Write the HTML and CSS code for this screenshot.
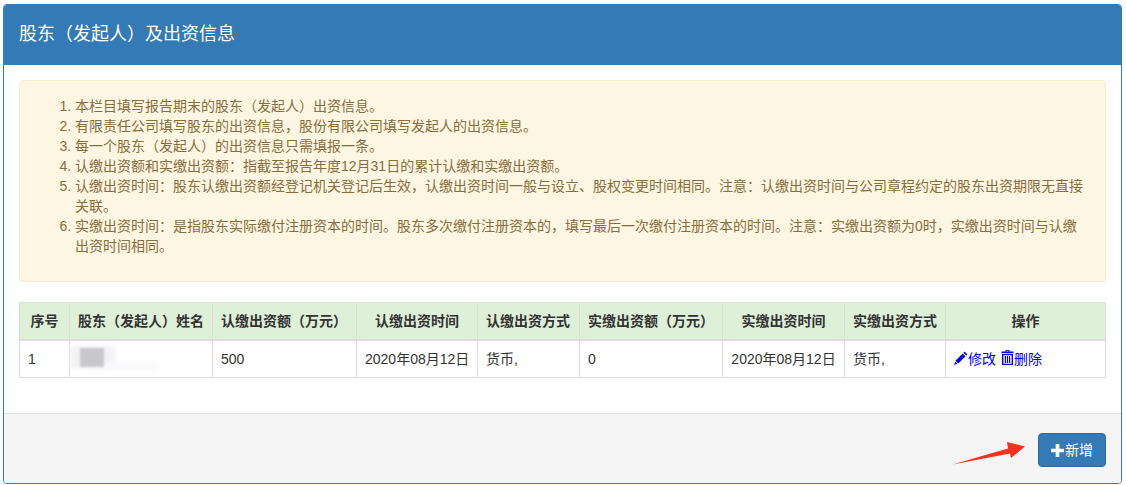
FILE: index.html

```html
<!DOCTYPE html>
<html lang="zh-CN">
<head>
  <meta charset="UTF-8" />
  <title>股东（发起人）及出资信息</title>
  <link rel="stylesheet" href="styles.css">
</head>
<body>
  <div class="panel">
    <div class="panel-heading">股东（发起人）及出资信息</div>
    <div class="panel-body">
      <div class="alert">
        <ol>
          <li>本栏目填写报告期末的股东（发起人）出资信息。</li>
          <li>有限责任公司填写股东的出资信息，股份有限公司填写发起人的出资信息。</li>
          <li>每一个股东（发起人）的出资信息只需填报一条。</li>
          <li>认缴出资额和实缴出资额：指截至报告年度12月31日的累计认缴和实缴出资额。</li>
          <li>认缴出资时间：股东认缴出资额经登记机关登记后生效，认缴出资时间一般与设立、股权变更时间相同。注意：认缴出资时间与公司章程约定的股东出资期限无直接关联。</li>
          <li>实缴出资时间：是指股东实际缴付注册资本的时间。股东多次缴付注册资本的，填写最后一次缴付注册资本的时间。注意：实缴出资额为0时，实缴出资时间与认缴出资时间相同。</li>
        </ol>
      </div>
      <table class="table">
        <colgroup>
          <col class="c-no"><col class="c-name"><col class="c-amount"><col class="c-date"><col class="c-way">
          <col class="c-amount2"><col class="c-date2"><col class="c-way2"><col class="c-op">
        </colgroup>
        <thead>
          <tr>
            <th class="center">序号</th>
            <th>股东（发起人）姓名</th>
            <th>认缴出资额（万元）</th>
            <th class="center">认缴出资时间</th>
            <th>认缴出资方式</th>
            <th>实缴出资额（万元）</th>
            <th class="center">实缴出资时间</th>
            <th>实缴出资方式</th>
            <th class="center">操作</th>
          </tr>
        </thead>
        <tbody>
          <tr>
            <td>1</td>
            <td><div class="blur-name"><span class="blur-halo"></span><span class="blur-wisp"></span><span class="blur-core"></span></div></td>
            <td>500</td>
            <td class="center">2020年08月12日</td>
            <td>货币,</td>
            <td>0</td>
            <td class="center">2020年08月12日</td>
            <td>货币,</td>
            <td class="ops">
              <a href="#"><svg class="icon" viewBox="0 0 14 14"><path d="M10.6 0.6 13.4 3.4 12.2 4.6 9.4 1.8ZM8.7 2.5 11.5 5.3 4.3 12.5 1.5 9.7ZM1.1 10.4 3.6 12.9 0.2 13.8Z"/></svg>修改</a>
              <a href="#"><svg class="icon trash" viewBox="0 0 13 15"><path d="M4.5 0H8.5V1.6H12.5V3.2H0.5V1.6H4.5ZM5.5 0.8V1.6H7.5V0.8ZM1 4H12V15H1ZM2.4 5.2V13.8H10.6V5.2ZM3.8 6H5V13H3.8ZM5.9 6H7.1V13H5.9ZM8 6H9.2V13H8Z" fill-rule="evenodd"/></svg>删除</a>
            </td>
          </tr>
        </tbody>
      </table>
    </div>
    <div class="panel-footer">
      <svg class="arrow" viewBox="0 0 76 26"><path d="M0.500 24.500 56 8.500 55 2 73 6.500 59 18 58 13.500Z"/></svg>
      <button class="btn"><svg class="icon plus" viewBox="0 0 12 12"><path d="M4.300 0H7.700V4.300H12V7.700H7.700V12H4.300V7.700H0V4.300H4.300Z"/></svg>新增</button>
    </div>
  </div>
</body>
</html>
```

FILE: styles.css

```css
* {
  box-sizing: border-box;
}
body {
  margin: 0;
  padding: 4px 4px 0 3px;
  background-color: #fff;
  color: #333;
  font-family: "Liberation Sans", "Noto Sans CJK SC", sans-serif;
  font-size: 14px;
  line-height: 20px;
}
.panel {
  border: 1px solid #337ab7;
  border-radius: 4px;
  overflow: hidden;
}
.panel-heading {
  height: 60px;
  padding: 15px;
  background-color: #337ab7;
  color: #fff;
  font-size: 18px;
  line-height: 28px;
}
.panel-body {
  padding: 15px;
}
.alert {
  padding: 15px;
  margin-bottom: 20px;
  background-color: #fdf6e3;
  border: 1px solid #faebcc;
  border-radius: 4px;
  color: #8a6d3b;
}
.alert ol {
  margin: 0 0 10px;
  padding-left: 40px;
}
.table {
  width: 100%;
  margin-bottom: 20px;
  border-collapse: collapse;
  table-layout: fixed;
}
.c-no { width: 50px; }
.c-name { width: 143px; }
.c-amount { width: 144px; }
.c-date { width: 121px; }
.c-way { width: 102px; }
.c-amount2 { width: 143px; }
.c-date2 { width: 122px; }
.c-way2 { width: 101px; }
.table th,
.table td {
  padding: 8px;
  border: 1px solid #ddd;
  text-align: left;
  white-space: nowrap;
}
.table th {
  background-color: #dff0d8;
  border-bottom-width: 2px;
  font-weight: bold;
}
.table th.center,
.table td.center {
  text-align: center;
}
.table td.ops {
  padding-right: 0;
}
.ops a {
  color: #00f;
  text-decoration: none;
}
.icon {
  width: 14px;
  height: 14px;
  fill: currentColor;
  vertical-align: -1px;
}
.icon.trash {
  width: 13px;
  height: 15px;
  margin-left: 1px;
}
.blur-name {
  position: relative;
  height: 20px;
}
.blur-halo {
  position: absolute;
  left: -7px;
  top: -3px;
  width: 44px;
  height: 22px;
  background-color: #f3f1f3;
  filter: blur(2px);
}
.blur-wisp {
  position: absolute;
  left: 10px;
  top: 14px;
  width: 70px;
  height: 6px;
  background-color: #f8f8fb;
  filter: blur(2px);
}
.blur-core {
  position: absolute;
  left: 2px;
  top: -1px;
  width: 24px;
  height: 19px;
  background-color: #c8c8ca;
  filter: blur(1px);
}
.panel-footer {
  position: relative;
  display: flex;
  justify-content: flex-end;
  padding: 19px 15px 16px;
  background-color: #f5f5f5;
  border-top: 1px solid #ddd;
}
.btn {
  height: 34px;
  padding: 6px 12px;
  background-color: #337ab7;
  border: 1px solid #2e6da4;
  border-radius: 4px;
  color: #fff;
  font: inherit;
}
.icon.plus {
  width: 13px;
  height: 13px;
  margin-right: 1px;
  vertical-align: -2px;
}
.arrow {
  position: absolute;
  left: 948px;
  top: 26px;
  width: 76px;
  height: 26px;
  fill: #f5311f;
}
```
